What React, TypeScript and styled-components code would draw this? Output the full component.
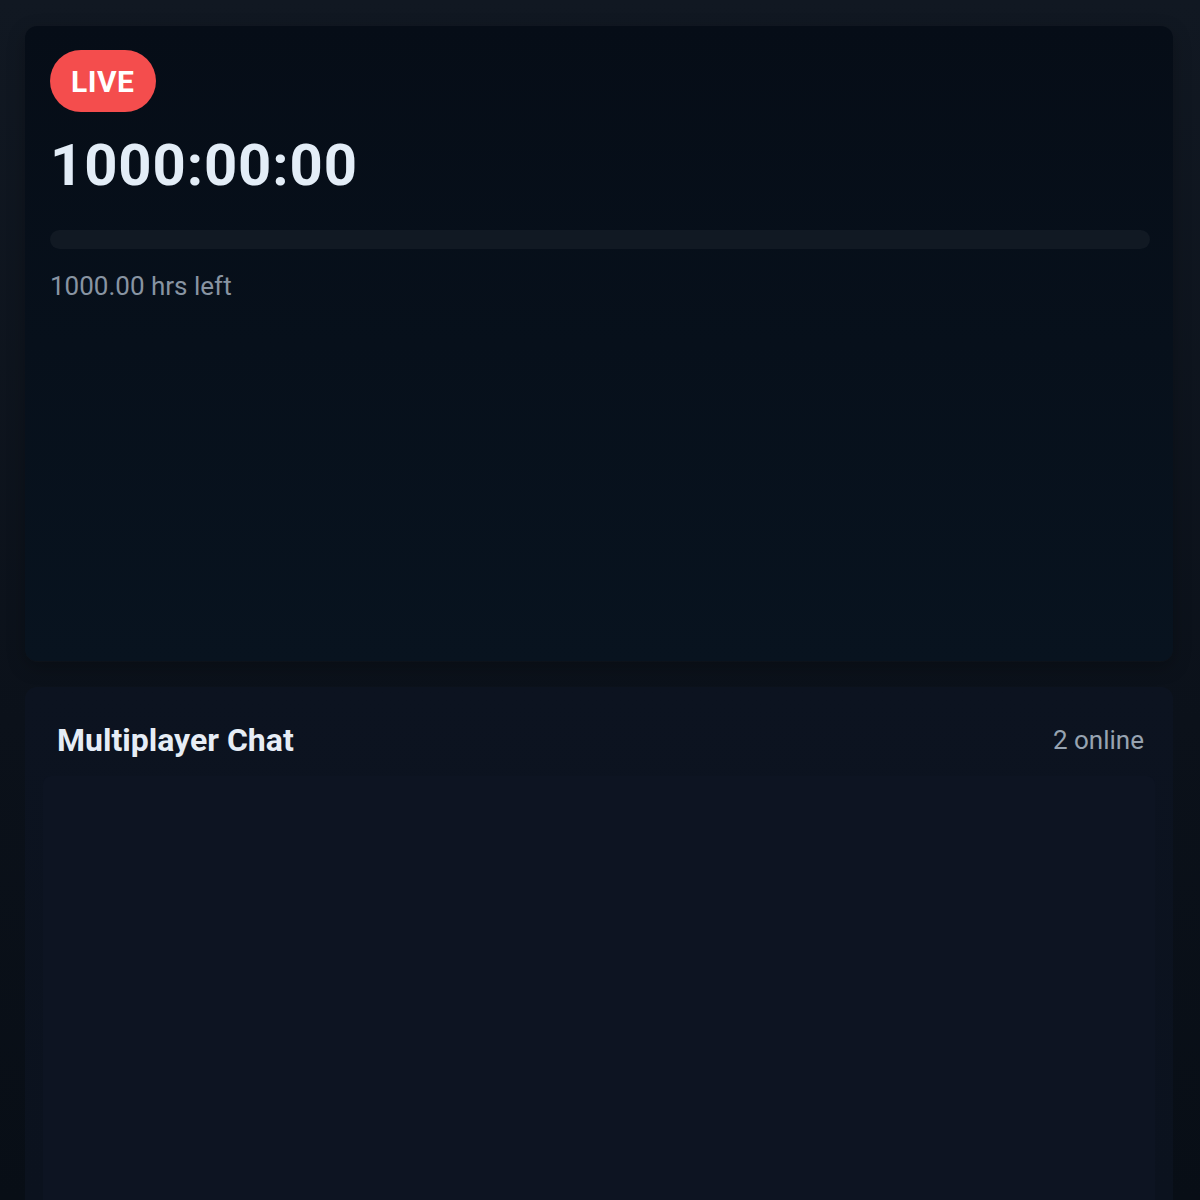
import styled, { createGlobalStyle } from "styled-components";

const GlobalStyle = createGlobalStyle`
  html, body {
    margin: 0;
    padding: 0;
    background: linear-gradient(180deg, #111822 0%, #0b111a 60%, #080e16 100%);
    min-height: 100%;
    font-family: Roboto, "Noto Sans", "Liberation Sans", sans-serif;
  }
  * { box-sizing: border-box; }
`;

const Page = styled.div`
  min-height: 1200px;
  padding: 26px 27px 0 25px;
  display: flex;
  flex-direction: column;
  gap: 26px;
`;

const TimerCard = styled.section`
  height: 635px;
  border-radius: 12px;
  background: linear-gradient(180deg, #060d17 0%, #08131f 100%);
  box-shadow: 0 1px 0 rgba(255, 255, 255, 0.02), 0 6px 18px rgba(0, 0, 0, 0.25);
  padding: 24px 23px 24px 25px;
  display: flex;
  flex-direction: column;
  align-items: flex-start;
`;

const LiveBadge = styled.span`
  display: inline-flex;
  align-items: center;
  justify-content: center;
  height: 62px;
  padding: 0 22px 0 21px;
  border-radius: 31px;
  background: #f44d4d;
  color: #ffffff;
  font-weight: 700;
  font-size: 30px;
  letter-spacing: 0.5px;
`;

const Clock = styled.div`
  margin-top: 24px;
  font-size: 58px;
  font-weight: 700;
  line-height: 1;
  color: #e3edf7;
  letter-spacing: 0.9px;
`;

const Track = styled.div`
  margin-top: 36px;
  width: 100%;
  height: 19px;
  border-radius: 10px;
  background: #111923;
`;

const Remaining = styled.div`
  margin-top: 22px;
  font-size: 26px;
  color: #8894a2;
`;

const ChatCard = styled.section`
  flex: 1;
  border-radius: 12px 12px 0 0;
  background: linear-gradient(180deg, #0c1320 0%, #0b121e 100%);
  padding: 22px 18px 0;
  display: flex;
  flex-direction: column;
`;

const ChatHeader = styled.header`
  display: flex;
  justify-content: space-between;
  align-items: center;
  padding: 12px 11px 12px 14px;
`;

const ChatTitle = styled.h2`
  margin: 0;
  font-size: 32px;
  font-weight: 700;
  color: #e6edf6;
`;

const OnlineCount = styled.span`
  font-size: 26px;
  color: #97a3b1;
`;

const Messages = styled.div`
  flex: 1;
  margin-top: 5px;
  border-radius: 8px 8px 0 0;
  background: #0d1422;
`;

export default function App() {
  return (
    <>
      <GlobalStyle />
      <Page>
        <TimerCard>
          <LiveBadge>LIVE</LiveBadge>
          <Clock>1000:00:00</Clock>
          <Track />
          <Remaining>1000.00 hrs left</Remaining>
        </TimerCard>
        <ChatCard>
          <ChatHeader>
            <ChatTitle>Multiplayer Chat</ChatTitle>
            <OnlineCount>2 online</OnlineCount>
          </ChatHeader>
          <Messages />
        </ChatCard>
      </Page>
    </>
  );
}
